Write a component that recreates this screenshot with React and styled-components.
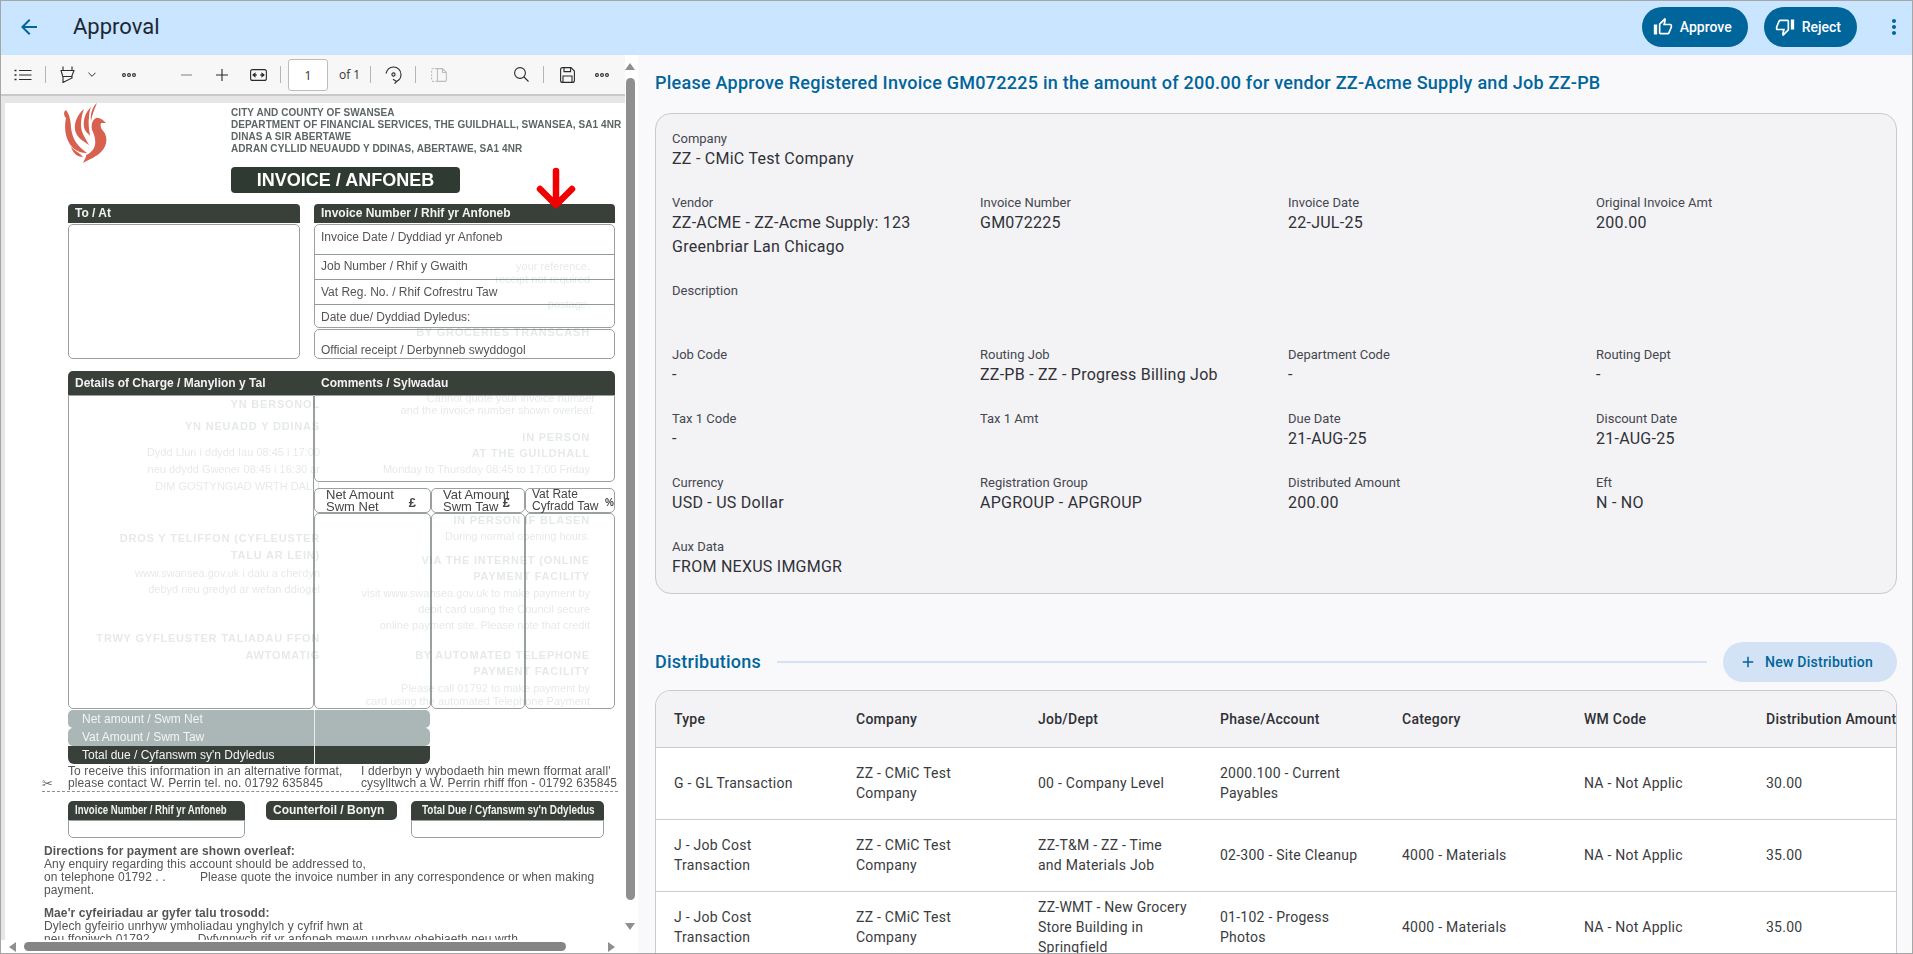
import React from 'react';
import styled, { createGlobalStyle } from 'styled-components';
import { MdOutlineThumbUp, MdOutlineThumbDown, MdArrowBack, MdAdd, MdMoreVert } from 'react-icons/md';

const GlobalStyle = createGlobalStyle`
    html, body { margin: 0; padding: 0; background: #fff; }
    * { box-sizing: border-box; }
    body { font-family: Roboto, "Liberation Sans", sans-serif; }
`;

const Frame = styled.div`
    width: 1913px;
    height: 954px;
    border: 1px solid #a6a6a6;
    display: flex;
    flex-direction: column;
    overflow: hidden;
`;

const Header = styled.header`
    flex: 0 0 54px;
    background: #c9e5ff;
    display: flex;
    align-items: center;
    padding: 0 6px 2px 16px;
`;

const BackButton = styled.button`
    border: 0;
    background: none;
    padding: 0;
    width: 24px;
    height: 24px;
    color: #00679a;
    font-size: 24px;
    display: flex;
`;

const PageTitle = styled.h1`
    margin: 0 auto 0 32px;
    font-size: 22px;
    line-height: 28px;
    font-weight: 400;
    color: #1c2733;
`;

const ActionButton = styled.button`
    height: 40px;
    border: 0;
    border-radius: 20px;
    background: #00659a;
    color: #fff;
    font: 500 14px/20px Roboto, sans-serif;
    display: flex;
    align-items: center;
    gap: 7px;
    padding: 0 16px 0 11px;
    margin-left: 16px;
    svg { font-size: 20px; }
`;

const MoreButton = styled.button`
    border: 0;
    background: none;
    color: #00659a;
    font-size: 24px;
    width: 24px;
    height: 24px;
    padding: 0;
    margin-left: 25px;
    display: flex;
`;

const Body = styled.div`
    flex: 1;
    min-height: 0;
    display: flex;
`;

/* pdf viewer */
const ViewerPane = styled.section`
    flex: 0 0 637px;
    display: grid;
    grid-template-columns: 624px 13px;
    grid-template-rows: 885px 13px;
    background: #fff;
`;

const ViewerMain = styled.div`
    grid-column: 1;
    grid-row: 1;
    display: flex;
    flex-direction: column;
    min-height: 0;
    overflow: hidden;
    background: #e6e6e6;
`;

const Toolbar = styled.div`
    flex: 0 0 41px;
    background: #f7f7f7;
    border-bottom: 2px solid #c8c8c8;
    display: flex;
    align-items: center;
    padding-left: 4px;
    color: #2b2b2b;
`;

const ToolButton = styled.span`
    width: ${({ $w }) => $w || 36}px;
    margin-left: ${({ $ml }) => $ml || 0}px;
    height: 30px;
    display: flex;
    align-items: center;
    justify-content: center;
    color: ${({ $color }) => $color || '#2b2b2b'};
`;

const ToolSep = styled.span`
    width: 1px;
    height: 17px;
    margin: 0 4px 0 ${({ $ml }) => $ml || 4}px;
    background: #b5b5b5;
`;

const PageInput = styled.span`
    width: 40px;
    height: 32px;
    margin-left: 3px;
    background: #fff;
    border: 1px solid #bdbdbd;
    border-radius: 3px;
    display: flex;
    align-items: center;
    justify-content: center;
    font: 400 13px "Open Sans", sans-serif;
    color: #3a3a3a;
`;

const PageCount = styled.span`
    margin-left: 11px;
    width: 19px;
    white-space: nowrap;
    font: 400 12px "Open Sans", sans-serif;
    color: #333;
`;

const ToolIcon = styled.svg.attrs({ fill: 'none', stroke: 'currentColor', strokeWidth: 1.1 })`
    display: block;
`;

const VerticalScroll = styled.div`
    grid-column: 2;
    grid-row: 1;
    background: #fff;
    display: flex;
    flex-direction: column;
    align-items: center;
    padding: 8px 3px 0 0;
`;

const VerticalThumb = styled.div`
    width: 9px;
    height: 822px;
    margin: 8px 0 23px;
    border-radius: 5px;
    background: #8f8f8f;
`;

const Triangle = styled.span`
    width: 0;
    height: 0;
    flex: none;
    border-style: solid;
    border-color: transparent;
    ${({ $dir }) => $dir === 'up' && 'border-width: 0 5px 7px; border-bottom-color: #8f8f8f;'}
    ${({ $dir }) => $dir === 'down' && 'border-width: 7px 5px 0; border-top-color: #8f8f8f;'}
    ${({ $dir }) => $dir === 'left' && 'border-width: 5px 7px 5px 0; border-right-color: #8f8f8f;'}
    ${({ $dir }) => $dir === 'right' && 'border-width: 5px 0 5px 7px; border-left-color: #8f8f8f;'}
`;

const HorizontalScroll = styled.div`
    grid-column: 1 / span 2;
    grid-row: 2;
    background: #fff;
    display: flex;
    align-items: center;
    padding: 0 0 0 8px;
`;

const HorizontalThumb = styled.div`
    width: 542px;
    height: 9px;
    margin: 0 42px 0 8px;
    border-radius: 5px;
    background: #858585;
`;

/* scanned invoice */
const PaperArea = styled.div`
    flex: 1;
    min-height: 0;
    padding: 7px 0 0 4px;
`;

const Sheet = styled.div`
    position: relative;
    width: 620px;
    height: 837px;
    overflow: hidden;
    background: #fff;
    padding-left: 63px;
    font-family: "Liberation Sans", Arial, sans-serif;
    font-size: 12px;
    color: #555;
    filter: blur(0.25px);
`;

const GhostLine = styled.div`
    position: absolute;
    top: ${({ $top }) => $top}px;
    right: ${({ $right }) => $right}px;
    white-space: nowrap;
    font-size: 11px;
    line-height: 12px;
    font-weight: ${({ $bold }) => ($bold ? 700 : 400)};
    letter-spacing: ${({ $bold }) => ($bold ? '0.8px' : '0')};
    color: rgba(90, 105, 105, 0.15);
`;

const LetterHead = styled.div`
    display: flex;
    height: 60px;
    margin-left: -5px;
`;

const Crest = styled.svg`
    flex: 0 0 44px;
    height: 60px;
    fill: #d8604f;
`;

const Address = styled.div`
    margin: 4px 0 0 124px;
    font-size: 10px;
    line-height: 12px;
    font-weight: 700;
    letter-spacing: 0.08px;
    white-space: nowrap;
    color: #5e6566;
`;

const TitlePill = styled.div`
    width: 229px;
    height: 26px;
    margin: 4px 0 11px 163px;
    border-radius: 4px;
    background: #2f3a33;
    color: #fff;
    font-size: 18px;
    line-height: 26px;
    font-weight: 700;
    text-align: center;
`;

const TopForm = styled.div`
    display: grid;
    grid-template-columns: 232px 301px;
    column-gap: 14px;
`;

const DarkBar = styled.div`
    height: ${({ $h }) => $h || 19}px;
    line-height: ${({ $h }) => $h || 19}px;
    padding-left: ${({ $pad }) => $pad || 7}px;
    border-radius: ${({ $radius }) => $radius || '4px 4px 0 0'};
    background: #39403a;
    color: #f2f2f2;
    font-weight: 700;
    white-space: nowrap;
    overflow: hidden;
`;

// the stub labels are printed in a condensed bold
const Condensed = styled.span`
    display: inline-block;
    transform: scaleX(${({ $x }) => $x});
    transform-origin: left center;
`;

const FormBox = styled.div`
    margin-top: ${({ $mt }) => $mt ?? 1}px;
    height: ${({ $h }) => $h}px;
    border: 1px solid #9aa0a0;
    border-radius: ${({ $radius }) => $radius || '5px'};
`;

const FormRow = styled.div`
    height: ${({ $h }) => $h}px;
    padding: ${({ $pt }) => $pt}px 0 0 6px;
    line-height: 14px;
    border-bottom: ${({ $plain }) => ($plain ? '0' : '1px solid #8f9a9a')};
    white-space: nowrap;
`;

const DetailHead = styled.div`
    display: grid;
    grid-template-columns: 246px 301px;
    margin-top: 12px;
`;

const DetailBody = styled.div`
    display: grid;
    grid-template-columns: 246px 301px;
`;

const AmountGrid = styled.div`
    display: grid;
    grid-template-columns: 117px 94px 90px;
    margin-top: 6px;
`;

const AmountHead = styled.div`
    position: relative;
    height: 25px;
    padding: 0 0 0 ${({ $pad }) => $pad || 11}px;
    border: 1px solid #9aa0a0;
    border-radius: 5px;
    font-size: ${({ $small }) => ($small ? 12 : 13)}px;
    line-height: 11.5px;
    color: #444;
    white-space: nowrap;
`;

const Unit = styled.b`
    position: absolute;
    right: 14px;
    top: 8px;
    ${({ $pct }) => $pct && 'right: 0; font-size: 10px;'}
`;

const AmountBody = styled.div`
    height: 196px;
    border: 1px solid #9aa0a0;
    border-radius: 5px;
`;

const Summary = styled.div`
    display: grid;
    grid-template-columns: 246px 116px;
    margin-top: 1px;
`;

const SummaryCell = styled.div`
    height: 18px;
    line-height: 18px;
    padding-left: 14px;
    color: #f4f4f4;
    font-size: 12px;
    white-space: nowrap;
    background: ${({ $dark }) => ($dark ? '#39403a' : '#abb6b6')};
    border-radius: ${({ $left, $dark }) => ($dark ? ($left ? '0 0 0 6px' : '0 0 6px 0') : ($left ? '5px 0 0 5px' : '0 5px 5px 0'))};
    border-left: ${({ $left }) => ($left ? '0' : '1px solid #e7ecec')};
`;

const AltFormat = styled.div`
    display: grid;
    grid-template-columns: 293px 1fr;
    margin-top: 1px;
    line-height: 12px;
    letter-spacing: 0.12px;
    white-space: nowrap;
`;

const CutLine = styled.div`
    position: relative;
    margin: 2px 0 9px -26px;
    width: 576px;
    border-top: 1px dashed #8d8d8d;
`;

const Scissors = styled.span`
    position: absolute;
    left: 0;
    top: -15px;
    font: 13px/14px "DejaVu Sans", sans-serif;
    color: #666;
`;

const StubRow = styled.div`
    display: flex;
    align-items: flex-start;
`;

const Stub = styled.div`
    width: ${({ $w }) => $w}px;
    margin-left: ${({ $ml }) => $ml || 0}px;
`;

const Directions = styled.div`
    margin: 7px 0 0 -24px;
    width: 570px;
    line-height: 13px;
    letter-spacing: 0.1px;
    white-space: pre-wrap;
    strong { display: block; }
    p { margin: 0 0 10px; }
`;

const Arrow = styled.svg`
    position: absolute;
    left: 531px;
    top: 64px;
`;

/* right side */
const DetailPane = styled.main`
    flex: 1;
    min-width: 0;
    background: #f9f9fc;
    padding: 18px 15px 0 17px;
    display: flex;
    flex-direction: column;
`;

const Subject = styled.h2`
    margin: 0 0 20px;
    font-size: 18px;
    line-height: 20px;
    font-weight: 500;
    color: #00659a;
    letter-spacing: 0.25px;
`;

const InfoCard = styled.div`
    flex: 0 0 481px;
    border: 1px solid #c9c9ce;
    border-radius: 16px;
    background: #f3f3f6;
    padding: 17px 0 0 16px;
    display: grid;
    grid-template-columns: repeat(3, 308px) 1fr;
    grid-auto-rows: min-content;
    row-gap: 24px;
`;

const Field = styled.div`
    grid-column: ${({ $full }) => ($full ? '1 / -1' : 'auto')};
    padding-right: 20px;
`;

const FieldLabel = styled.div`
    font-size: 13px;
    line-height: 16px;
    color: #45464f;
`;

const FieldValue = styled.div`
    min-height: 24px;
    font-size: 16px;
    line-height: 24px;
    letter-spacing: 0.25px;
    color: #303136;
`;

const SectionHead = styled.div`
    display: flex;
    align-items: center;
    margin-top: 48px;
`;

const SectionTitle = styled.h3`
    margin: 0;
    font-size: 18px;
    line-height: 24px;
    font-weight: 500;
    letter-spacing: 0.25px;
    color: #00659a;
`;

const SectionRule = styled.div`
    flex: 1;
    height: 2px;
    margin: 0 16px;
    background: #d3e3f5;
`;

const NewButton = styled.button`
    height: 40px;
    width: 174px;
    border: 0;
    border-radius: 20px;
    background: #d3e3f5;
    color: #00659a;
    font: 500 14px/20px Roboto, sans-serif;
    letter-spacing: 0.25px;
    display: flex;
    align-items: center;
    gap: 8px;
    padding: 0 0 0 16px;
    white-space: nowrap;
    svg { font-size: 18px; }
`;

const TableCard = styled.div`
    flex: 1;
    min-height: 0;
    margin-top: 8px;
    border: 1px solid #c9c9ce;
    border-bottom: 0;
    border-radius: 16px 16px 0 0;
    background: #fff;
    overflow: hidden;
`;

const Table = styled.table`
    border-collapse: collapse;
    table-layout: fixed;
    width: 1274px;
`;

const Th = styled.th`
    width: 182px;
    height: 56px;
    padding: 0 0 0 18px;
    background: #f3f3f6;
    border-bottom: 1px solid #c9ccd4;
    text-align: left;
    font-size: 14px;
    font-weight: 500;
    letter-spacing: 0.25px;
    color: #2f3035;
    white-space: nowrap;
`;

const Td = styled.td`
    height: 72px;
    padding: 0 4px 0 18px;
    border-bottom: 1px solid #c9ccd4;
    font-size: 14px;
    line-height: 20px;
    letter-spacing: 0.25px;
    color: #3a3b40;
    white-space: pre-line;
    vertical-align: middle;
    overflow: hidden;
`;

const fields = [
    { label: 'Company', value: 'ZZ - CMiC Test Company', full: true },
    { label: 'Vendor', value: 'ZZ-ACME - ZZ-Acme Supply: 123 Greenbriar Lan Chicago' },
    { label: 'Invoice Number', value: 'GM072225' },
    { label: 'Invoice Date', value: '22-JUL-25' },
    { label: 'Original Invoice Amt', value: '200.00' },
    { label: 'Description', value: '', full: true },
    { label: 'Job Code', value: '-' },
    { label: 'Routing Job', value: 'ZZ-PB - ZZ - Progress Billing Job' },
    { label: 'Department Code', value: '-' },
    { label: 'Routing Dept', value: '-' },
    { label: 'Tax 1 Code', value: '-' },
    { label: 'Tax 1 Amt', value: '' },
    { label: 'Due Date', value: '21-AUG-25' },
    { label: 'Discount Date', value: '21-AUG-25' },
    { label: 'Currency', value: 'USD - US Dollar' },
    { label: 'Registration Group', value: 'APGROUP - APGROUP' },
    { label: 'Distributed Amount', value: '200.00' },
    { label: 'Eft', value: 'N - NO' },
    { label: 'Aux Data', value: 'FROM NEXUS IMGMGR', full: true },
];

const columns = ['Type', 'Company', 'Job/Dept', 'Phase/Account', 'Category', 'WM Code', 'Distribution Amount'];

const rows = [
    ['G - GL Transaction', 'ZZ - CMiC Test\nCompany', '00 - Company Level', '2000.100 - Current\nPayables', '', 'NA - Not Applic', '30.00'],
    ['J - Job Cost\nTransaction', 'ZZ - CMiC Test\nCompany', 'ZZ-T&M - ZZ - Time\nand Materials Job', '02-300 - Site Cleanup', '4000 - Materials', 'NA - Not Applic', '35.00'],
    ['J - Job Cost\nTransaction', 'ZZ - CMiC Test\nCompany', 'ZZ-WMT - New Grocery\nStore Building in\nSpringfield', '01-102 - Progess\nPhotos', '4000 - Materials', 'NA - Not Applic', '35.00'],
];

// show-through from the back of the scanned page: [top, right edge, text, bold]
const ghostLines = [
    [157, 35, 'your reference.', 0],
    [170, 35, 'receipt not required', 0],
    [195, 35, 'postage.', 0],
    [223, 35, 'BY GROCERIES TRANSCASH', 1],
    [289, 30, 'Cannot quote your invoice number', 0],
    [301, 30, 'and the invoice number shown overleaf.', 0],
    [328, 35, 'IN PERSON', 1],
    [344, 35, 'AT THE GUILDHALL', 1],
    [360, 35, 'Monday to Thursday 08:45 to 17:00 Friday', 0],
    [295, 305, 'YN BERSONOL', 1],
    [317, 305, 'YN NEUADD Y DDINAS', 1],
    [343, 305, 'Dydd Llun i ddydd Iau 08:45 i 17:00', 0],
    [360, 305, 'neu ddydd Gwener 08:45 i 16:30 ar', 0],
    [377, 305, 'DIM GOSTYNGIAD WRTH DALU', 0],
    [411, 35, 'IN PERSON   IF BLASEN', 1],
    [427, 35, 'During normal opening hours.', 0],
    [429, 305, 'DROS Y TELIFFON (CYFLEUSTER', 1],
    [446, 305, 'TALU AR LEIN)', 1],
    [451, 35, 'VIA THE INTERNET (ONLINE', 1],
    [467, 35, 'PAYMENT FACILITY', 1],
    [484, 35, 'visit www.swansea.gov.uk to make payment by', 0],
    [500, 35, 'debit card using the Council secure', 0],
    [516, 35, 'online payment site. Please note that credit', 0],
    [464, 305, 'www.swansea.gov.uk i dalu a cherdyn', 0],
    [480, 305, 'debyd neu gredyd ar wefan ddiogel', 0],
    [529, 305, 'TRWY GYFLEUSTER TALIADAU FFON', 1],
    [546, 305, 'AWTOMATIG', 1],
    [546, 35, 'BY AUTOMATED TELEPHONE', 1],
    [562, 35, 'PAYMENT FACILITY', 1],
    [579, 35, 'Please call 01792 to make payment by', 0],
    [592, 35, 'card using the automated Telephone Payment', 0],
];

const Phoenix = () => (
    <Crest viewBox="0 0 44 60">
        <path d="M3 7C0 9 1 13 3 15C1 24 2 36 9 44C14 49 20 50 24 50C17 45 11 39 9 30C7 23 9 15 3 7Z" />
        <path d="M21 6C14 12 11 20 12 27C14 35 20 38 26 42C22 34 18 30 18 22C18 16 19 11 21 6Z" />
        <path d="M28 4C22 10 20 17 21 24C22 29 25 30 27 33C26 26 25 20 26 14C26 10 27 7 28 4Z" />
        <path d="M34 0C30 3 27 10 28 18C29 12 31 7 34 0Z" />
        <path d="M33 15C36 14 40 17 43 20L38 20C37 23 38 26 41 29C45 35 44 43 38 49C33 54 27 56 20 60C22 55 24 53 23 52C28 50 31 46 32 42C33 36 31 31 29 27C28 22 29 17 33 15Z" />
        <path d="M8 44C12 48 17 50 20 54C14 54 10 50 8 44Z" />
    </Crest>
);

const Dots = () => (
    <ToolIcon width="14" height="4" viewBox="0 0 14 4" fill="currentColor" stroke="none">
        <circle cx="2" cy="2" r="1.4" />
        <circle cx="7" cy="2" r="1.4" />
        <circle cx="12" cy="2" r="1.4" />
    </ToolIcon>
);

const ViewerToolbar = () => (
    <Toolbar>
        <ToolButton $w={36}>
            <ToolIcon width="18" height="12" viewBox="0 0 18 12">
                <path d="M5 1.5H17.5M5 6H17.5M5 10.5H17.5" />
                <path d="M.5 1.5H2.5M.5 6H2.5M.5 10.5H2.5" strokeWidth="1.6" />
            </ToolIcon>
        </ToolButton>
        <ToolSep />
        <ToolButton $w={34}>
            <ToolIcon width="15" height="17" viewBox="0 0 15 17">
                <path d="M3 .5V4M12 .5V4M.5 4.5H14.5M1 4.5L3 11V16.5L12 12V9.5L14 4.5M3 10.5H12.2" />
            </ToolIcon>
        </ToolButton>
        <ToolButton $w={16}>
            <ToolIcon width="8" height="5" viewBox="0 0 9 5" stroke="#8a8a8a" strokeWidth="0.9">
                <path d="M.5.5L4.5 4.5L8.5.5" />
            </ToolIcon>
        </ToolButton>
        <ToolButton $w={36} $ml={11}><Dots /></ToolButton>
        <ToolButton $w={36} $ml={21} $color="#8a8a8a">
            <ToolIcon width="11" height="2" viewBox="0 0 11 2" strokeWidth="1.6">
                <path d="M0 1H11" />
            </ToolIcon>
        </ToolButton>
        <ToolButton $w={35}>
            <ToolIcon width="12" height="12" viewBox="0 0 12 12">
                <path d="M0 6H12M6 0V12" />
            </ToolIcon>
        </ToolButton>
        <ToolButton $w={35} $ml={2}>
            <ToolIcon width="17" height="12" viewBox="0 0 17 12">
                <rect x=".6" y=".6" width="15.8" height="10.8" rx="2" />
                <path d="M3 6H7M10 6H14" />
                <path d="M3 6L5 4.4V7.6ZM14 6L12 4.4V7.6Z" fill="currentColor" />
            </ToolIcon>
        </ToolButton>
        <ToolSep />
        <PageInput>1</PageInput>
        <PageCount>of 1</PageCount>
        <ToolSep $ml={12} />
        <ToolButton $w={36}>
            <ToolIcon width="17" height="18" viewBox="0 0 17 18">
                <path d="M1 7.5C2 3.5 5 1 8.5 1C12.6 1 16 4.4 16 8.5C16 11.6 14.2 14.2 11.4 15.4" />
                <path d="M8 13.2L11.6 15.5L9.5 17.6" />
                <circle cx="8.5" cy="8.5" r="1.6" />
            </ToolIcon>
        </ToolButton>
        <ToolSep />
        <ToolButton $w={36} $ml={1} $color="#bdbdbd">
            <ToolIcon width="16" height="14" viewBox="0 0 16 14">
                <path d="M6 .6H2C1.2.6.6 1.2.6 2V12C.6 12.8 1.2 13.4 2 13.4H6" strokeDasharray="2 1.4" />
                <path d="M6.5.6H11.5L15.4 4.5V12C15.4 12.8 14.8 13.4 14 13.4H6.5V.6ZM11.5.6V4.5H15.4" />
            </ToolIcon>
        </ToolButton>
        <ToolButton $w={36} $ml={46}>
            <ToolIcon width="15" height="15" viewBox="0 0 15 15">
                <circle cx="6" cy="6" r="5.4" />
                <path d="M10 10L14.5 14.5" />
            </ToolIcon>
        </ToolButton>
        <ToolSep />
        <ToolButton $w={36} $ml={1}>
            <ToolIcon width="15" height="16" viewBox="0 0 15 16" strokeWidth="1.2">
                <path d="M.6 2.6C.6 1.5 1.5.6 2.6.6H11L14.4 4V13.4C14.4 14.5 13.5 15.4 12.4 15.4H2.6C1.5 15.4.6 14.5.6 13.4Z" />
                <path d="M4 .8V4.6H10.6V.8M3 15.2V9H12V15.2" />
            </ToolIcon>
        </ToolButton>
        <ToolButton $w={34}><Dots /></ToolButton>
    </Toolbar>
);

const InvoiceSheet = () => (
    <Sheet>
        {ghostLines.map(([top, right, text, bold]) => (
            <GhostLine key={`${top}-${right}`} $top={top} $right={right} $bold={bold}>{text}</GhostLine>
        ))}
        <LetterHead>
            <Phoenix />
            <Address>
                CITY AND COUNTY OF SWANSEA<br />
                DEPARTMENT OF FINANCIAL SERVICES, THE GUILDHALL, SWANSEA, SA1 4NR<br />
                DINAS A SIR ABERTAWE<br />
                ADRAN CYLLID NEUAUDD Y DDINAS, ABERTAWE, SA1 4NR
            </Address>
        </LetterHead>
        <TitlePill>INVOICE / ANFONEB</TitlePill>
        <TopForm>
            <div>
                <DarkBar>To / At</DarkBar>
                <FormBox $h={135} />
            </div>
            <div>
                <DarkBar>Invoice Number / Rhif yr Anfoneb</DarkBar>
                <FormBox $h={104}>
                    <FormRow $h={30} $pt={5}>Invoice Date / Dyddiad yr Anfoneb</FormRow>
                    <FormRow $h={25} $pt={4}>Job Number / Rhif y Gwaith</FormRow>
                    <FormRow $h={25} $pt={5}>Vat Reg. No. / Rhif Cofrestru Taw</FormRow>
                    <FormRow $h={22} $pt={5} $plain>Date due/  Dyddiad Dyledus:</FormRow>
                </FormBox>
                <FormBox $h={30} $mt={1}>
                    <FormRow $h={28} $pt={13} $plain>Official receipt /  Derbynneb swyddogol</FormRow>
                </FormBox>
            </div>
        </TopForm>
        <DetailHead>
            <DarkBar $h={24} $radius="5px 0 0 0">Details of Charge / Manylion y Tal</DarkBar>
            <DarkBar $h={24} $radius="0 5px 0 0">Comments / Sylwadau</DarkBar>
        </DetailHead>
        <DetailBody>
            <FormBox $h={314} $mt={0} $radius="0 0 5px 5px" />
            <div>
                <FormBox $h={87} $mt={0} $radius="0 0 5px 5px" />
                <AmountGrid>
                    <AmountHead>Net Amount<br />Swm Net<Unit>£</Unit></AmountHead>
                    <AmountHead>Vat Amount<br />Swm Taw<Unit>£</Unit></AmountHead>
                    <AmountHead $pad={6} $small>Vat Rate<br />Cyfradd Taw<Unit $pct>%</Unit></AmountHead>
                    <AmountBody />
                    <AmountBody />
                    <AmountBody />
                </AmountGrid>
            </div>
        </DetailBody>
        <Summary>
            <SummaryCell $left>Net amount / Swm Net</SummaryCell>
            <SummaryCell />
            <SummaryCell $left>Vat Amount / Swm Taw</SummaryCell>
            <SummaryCell />
            <SummaryCell $left $dark>Total due / Cyfanswm sy'n Ddyledus</SummaryCell>
            <SummaryCell $dark />
        </Summary>
        <AltFormat>
            <div>To receive this information in an alternative format,<br />please contact W. Perrin tel. no. 01792 635845</div>
            <div>I dderbyn y wybodaeth hin mewn fformat arall'<br />cysylltwch a W. Perrin rhiff ffon - 01792 635845</div>
        </AltFormat>
        <CutLine><Scissors>✂</Scissors></CutLine>
        <StubRow>
            <Stub $w={177}>
                <DarkBar $radius="5px 5px 0 0"><Condensed $x={0.8}>Invoice Number / Rhif yr Anfoneb</Condensed></DarkBar>
                <FormBox $h={18} $mt={0} $radius="0 0 5px 5px" />
            </Stub>
            <Stub $w={131} $ml={21}>
                <DarkBar $radius="5px" $pad={7}>Counterfoil / Bonyn</DarkBar>
            </Stub>
            <Stub $w={193} $ml={14}>
                <DarkBar $radius="5px 5px 0 0" $pad={11}><Condensed $x={0.83}>Total Due / Cyfanswm sy'n Ddyledus</Condensed></DarkBar>
                <FormBox $h={18} $mt={0} $radius="0 0 5px 5px" />
            </Stub>
        </StubRow>
        <Directions>
            <p>
                <strong>Directions for payment are shown overleaf:</strong>
                Any enquiry regarding this account should be addressed to,{'\n'}
                on telephone 01792 . .          Please quote the invoice number in any correspondence or when making{'\n'}
                payment.
            </p>
            <p>
                <strong>Mae'r cyfeiriadau ar gyfer talu trosodd:</strong>
                Dylech gyfeirio unrhyw ymholiadau ynghylch y cyfrif hwn at{'\n'}
                neu ffoniwch 01792 . .          Dyfynnwch rif yr anfoneb mewn unrhyw ohebiaeth neu wrth
            </p>
        </Directions>
        <Arrow width="40" height="42" viewBox="0 0 40 42" fill="none" stroke="#f00000" strokeWidth="6.5" strokeLinecap="round" strokeLinejoin="round">
            <path d="M20 4V37M4 22L20 38L36 22" />
        </Arrow>
    </Sheet>
);

export default function App() {
    return (
        <>
            <GlobalStyle />
            <Frame>
                <Header>
                    <BackButton><MdArrowBack /></BackButton>
                    <PageTitle>Approval</PageTitle>
                    <ActionButton><MdOutlineThumbUp />Approve</ActionButton>
                    <ActionButton><MdOutlineThumbDown />Reject</ActionButton>
                    <MoreButton><MdMoreVert /></MoreButton>
                </Header>
                <Body>
                    <ViewerPane>
                        <ViewerMain>
                            <ViewerToolbar />
                            <PaperArea>
                                <InvoiceSheet />
                            </PaperArea>
                        </ViewerMain>
                        <VerticalScroll>
                            <Triangle $dir="up" />
                            <VerticalThumb />
                            <Triangle $dir="down" />
                        </VerticalScroll>
                        <HorizontalScroll>
                            <Triangle $dir="left" />
                            <HorizontalThumb />
                            <Triangle $dir="right" />
                        </HorizontalScroll>
                    </ViewerPane>
                    <DetailPane>
                        <Subject>Please Approve Registered Invoice GM072225 in the amount of 200.00 for vendor ZZ-Acme Supply and Job ZZ-PB</Subject>
                        <InfoCard>
                            {fields.map((f) => (
                                <Field key={f.label} $full={f.full}>
                                    <FieldLabel>{f.label}</FieldLabel>
                                    <FieldValue>{f.value}</FieldValue>
                                </Field>
                            ))}
                        </InfoCard>
                        <SectionHead>
                            <SectionTitle>Distributions</SectionTitle>
                            <SectionRule />
                            <NewButton><MdAdd />New Distribution</NewButton>
                        </SectionHead>
                        <TableCard>
                            <Table>
                                <thead>
                                    <tr>{columns.map((c) => <Th key={c}>{c}</Th>)}</tr>
                                </thead>
                                <tbody>
                                    {rows.map((row, i) => (
                                        <tr key={i}>{row.map((cell, j) => <Td key={j}>{cell}</Td>)}</tr>
                                    ))}
                                </tbody>
                            </Table>
                        </TableCard>
                    </DetailPane>
                </Body>
            </Frame>
        </>
    );
}
